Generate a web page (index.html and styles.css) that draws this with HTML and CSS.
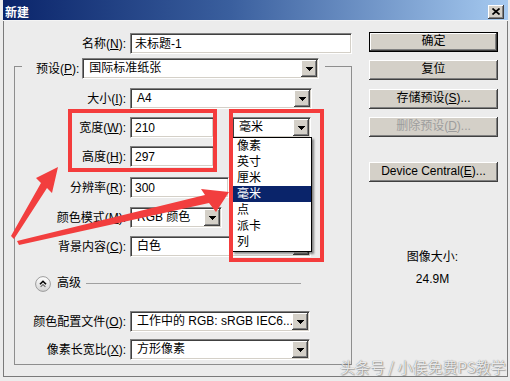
FILE: index.html
```html
<!DOCTYPE html>
<html lang="zh-CN">
<head>
<meta charset="utf-8">
<title>新建</title>
<link rel="stylesheet" href="styles.css">
</head>
<body>
<div class="window">
  <div class="titlebar">
    <span class="title">新建</span>
    <span class="close"><svg width="8" height="7" viewBox="0 0 8 7"><path d="M0.5 0.5 7.5 6.5M7.5 0.5 0.5 6.5" stroke="#000" stroke-width="1.7" fill="none"/></svg></span>
  </div>
  <div class="frame">
    <div class="left">
      <div class="row name-row">
        <span class="lbl">名称(<u>N</u>):</span>
        <div class="field w-name">未标题-1</div>
      </div>
      <fieldset class="group">
        <legend class="legend">
          <div class="legend-inner">
            <span class="lbl-inline">预设(<u>P</u>):</span>
            <div class="select w-preset"><span class="val">国际标准纸张</span><span class="arrow"><svg width="7" height="4" viewBox="0 0 7 4"><path d="M0 0h7v1H0zM1 1h5v1H1zM2 2h3v1H2zM3 3h1v1H3z"/></svg></span></div>
          </div>
        </legend>
        <div class="row r-size">
          <span class="lbl">大小(<u>I</u>):</span>
          <div class="select w-size"><span class="val">A4</span><span class="arrow"><svg width="7" height="4" viewBox="0 0 7 4"><path d="M0 0h7v1H0zM1 1h5v1H1zM2 2h3v1H2zM3 3h1v1H3z"/></svg></span></div>
        </div>
        <div class="row">
          <span class="lbl">宽度(<u>W</u>):</span>
          <div class="field w-dim">210</div>
          <div class="select w-unit"><span class="val">毫米</span><span class="arrow"><svg width="7" height="4" viewBox="0 0 7 4"><path d="M0 0h7v1H0zM1 1h5v1H1zM2 2h3v1H2zM3 3h1v1H3z"/></svg></span>
            <ul class="dropdown">
              <li>像素</li>
              <li>英寸</li>
              <li>厘米</li>
              <li class="sel">毫米</li>
              <li>点</li>
              <li>派卡</li>
              <li>列</li>
            </ul>
          </div>
        </div>
        <div class="row">
          <span class="lbl">高度(<u>H</u>):</span>
          <div class="field w-dim">297</div>
        </div>
        <div class="row r-res">
          <span class="lbl">分辨率(<u>R</u>):</span>
          <div class="field w-res">300</div>
        </div>
        <div class="row r-mode">
          <span class="lbl">颜色模式(<u>M</u>):</span>
          <div class="select w-mode"><span class="val">RGB 颜色</span><span class="arrow"><svg width="7" height="4" viewBox="0 0 7 4"><path d="M0 0h7v1H0zM1 1h5v1H1zM2 2h3v1H2zM3 3h1v1H3z"/></svg></span></div>
        </div>
        <div class="row">
          <span class="lbl">背景内容(<u>C</u>):</span>
          <div class="select w-bg"><span class="val">白色</span><span class="arrow"><svg width="7" height="4" viewBox="0 0 7 4"><path d="M0 0h7v1H0zM1 1h5v1H1zM2 2h3v1H2zM3 3h1v1H3z"/></svg></span></div>
        </div>
        <div class="adv">
          <svg class="adv-btn" width="16" height="16" viewBox="0 0 16 16">
            <defs><linearGradient id="advg" x1="0" y1="0" x2="0" y2="1"><stop offset="0" stop-color="#ffffff"/><stop offset="1" stop-color="#d2d2d2"/></linearGradient></defs>
            <circle cx="8" cy="8" r="7.4" fill="url(#advg)" stroke="#9c9c9c" stroke-width="1"/>
            <path d="M5 8.3 8 5.3 11 8.3" fill="none" stroke="#000" stroke-width="1.6"/>
            <path d="M5.6 10.8 8 8.6 10.4 10.8" fill="none" stroke="#6a6a6a" stroke-width="1.1"/>
          </svg>
          <span class="adv-text">高级</span>
          <span class="adv-line"></span>
        </div>
        <div class="row r-profile">
          <span class="lbl">颜色配置文件(<u>O</u>):</span>
          <div class="select w-prof"><span class="val">工作中的 RGB: sRGB IEC6...</span><span class="arrow"><svg width="7" height="4" viewBox="0 0 7 4"><path d="M0 0h7v1H0zM1 1h5v1H1zM2 2h3v1H2zM3 3h1v1H3z"/></svg></span></div>
        </div>
        <div class="row r-aspect">
          <span class="lbl">像素长宽比(<u>X</u>):</span>
          <div class="select w-prof"><span class="val">方形像素</span><span class="arrow"><svg width="7" height="4" viewBox="0 0 7 4"><path d="M0 0h7v1H0zM1 1h5v1H1zM2 2h3v1H2zM3 3h1v1H3z"/></svg></span></div>
        </div>
      </fieldset>
    </div>
    <div class="right">
      <div class="btn btn-default">确定</div>
      <div class="btn b-reset">复位</div>
      <div class="btn b-save">存储预设(<u>S</u>)...</div>
      <div class="btn b-del disabled">删除预设(<u>D</u>)...</div>
      <div class="btn b-device">Device Central(<u>E</u>)...</div>
      <div class="info">
        <div class="info-label">图像大小:</div>
        <div class="info-value">24.9M</div>
      </div>
    </div>
  </div>
</div>

<div class="mark mark-1"></div>
<div class="mark mark-2"></div>
<svg class="arrows" width="510" height="381" viewBox="0 0 510 381">
  <polygon points="11,236 41,183 36,178 58,167 52,193 47,188 14,239" fill="#f23e3e"/>
  <polygon points="17,241 205,195 201,189 229,192 216,212 209,203 19,245" fill="#f23e3e"/>
</svg>
<div class="watermark">头条号 / 小侯免费PS教学</div>
</body>
</html>
```
FILE: styles.css
```css
* { box-sizing: border-box; }
html, body { margin: 0; padding: 0; }
body {
  width: 510px;
  height: 381px;
  position: relative;
  overflow: hidden;
  background: #ececec;
  color: #000;
  font-family: "Liberation Sans", "Noto Sans CJK SC", sans-serif;
  font-size: 12px;
  line-height: 16px;
}
u { text-decoration: underline; text-underline-offset: 1px; }

.window {
  margin-left: 3px;
  width: 505px;
  height: 377px;
  display: flex;
  flex-direction: column;
}
.titlebar {
  height: 21px;
  flex: none;
  display: flex;
  justify-content: space-between;
  align-items: flex-start;
  background: linear-gradient(to right, #0a246a 0%, #3a5f9e 45%, #a6caf0 100%);
  border-bottom: 1px solid #f4f4f4;
}
.title {
  color: #fff;
  font-family: "Noto Sans CJK SC", sans-serif;
  font-weight: bold;
  font-size: 12px;
  line-height: 16px;
  padding: 4px 0 0 2px;
}
.close {
  width: 16px;
  height: 14px;
  margin: 5px 4px 0 0;
  background: #d4d0c8;
  box-shadow: inset -1px -1px #404040, inset 1px 1px #fff, inset -2px -2px #808080;
  display: flex;
  align-items: center;
  justify-content: center;
}
.close svg { display: block; margin: 0 1px 1px 0; }

.frame {
  flex: 1;
  display: flex;
  border: 1px solid #7a7a7a;
  border-top: none;
  padding: 11px 0 0 10px;
}
.left {
  width: 338px;
  flex: none;
  padding-top: 1px;
}
.right {
  width: 129px;
  flex: none;
  margin-left: 17px;
}

/* rows */
.row {
  display: flex;
  align-items: center;
  height: 21px;
  margin-top: 8px;
}
.name-row, .r-size { margin-top: 0; }
.r-res { margin-top: 10px; }
.r-mode { margin-top: 9px; }
.r-profile { margin-top: 19px; }
.r-aspect { margin-top: 7px; }

.lbl {
  width: 112px;
  flex: none;
  text-align: right;
  white-space: nowrap;
  margin-right: 4px;
}
.group .lbl { width: 111px; }
.lbl-inline { white-space: nowrap; margin-right: 3px; }

/* group box */
.group {
  margin: 0;
  min-width: 0;
  width: 338px;
  border: 1px solid #8e8e8e;
  padding: 9px 0 4px 0;
}
.legend {
  margin-left: 7px;
  padding: 4px 6px 0 14px;
}
.legend-inner {
  display: flex;
  align-items: center;
  height: 21px;
}

/* controls */
.field, .select {
  height: 21px;
  flex: none;
  background: #fff;
  border: 1px solid;
  border-color: #808080 #fff #fff #808080;
  box-shadow: inset 1px 1px #404040, inset -1px -1px #d4d0c8;
  white-space: nowrap;
}
.field {
  padding: 1px 3px 0 4px;
  line-height: 18px;
}
.select {
  display: flex;
  padding: 1px;
  position: relative;
}
.select .val {
  flex: 1;
  min-width: 0;
  overflow: hidden;
  padding-left: 5px;
  line-height: 17px;
}
.select .arrow {
  width: 16px;
  flex: none;
  background: #d4d0c8;
  box-shadow: inset -1px -1px #404040, inset 1px 1px #fff, inset -2px -2px #808080;
  display: flex;
  align-items: center;
  justify-content: center;
}
.arrow svg { display: block; margin-top: 1px; }

.w-name { width: 222px; }
.w-preset { width: 237px; }
.w-size { width: 182px; }
.w-dim { width: 84px; }
.w-res { width: 99px; }
.w-unit { width: 79px; margin-left: 18px; }
.w-mode { width: 92px; }
.w-bg { width: 181px; }
.w-prof { width: 180px; }

/* open dropdown list */
.dropdown {
  position: absolute;
  top: 100%;
  left: -1px;
  width: 80px;
  height: 115px;
  margin: 0;
  padding: 0 0 1px 0;
  list-style: none;
  background: #fff;
  border: 1px solid #000;
  box-shadow: 2px 2px 2px rgba(0, 0, 0, 0.45);
  z-index: 5;
}
.dropdown li {
  height: 16px;
  line-height: 16px;
  padding-left: 4px;
}
.dropdown li.sel { background: #0a246a; color: #fff; }

/* advanced */
.adv {
  display: flex;
  align-items: center;
  height: 16px;
  margin-top: 19px;
  padding-left: 20px;
  padding-right: 50px;
}
.adv-btn { display: block; flex: none; }
.adv-text { margin-left: 6px; line-height: 16px; margin-top: -2px; }
.adv-line {
  flex: 1;
  height: 1px;
  margin-left: 5px;
  margin-top: -2px;
  background: #a0a0a0;
}

/* buttons */
.btn {
  height: 20px;
  width: 129px;
  background: #d4d0c8;
  box-shadow: inset -1px -1px #404040, inset 1px 1px #fff, inset -2px -2px #808080;
  text-align: center;
  line-height: 19px;
  white-space: nowrap;
}
.btn-default {
  border: 1px solid #000;
  line-height: 17px;
}
.b-reset { margin-top: 8px; }
.b-save { margin-top: 9px; }
.b-del { margin-top: 8px; }
.b-device { margin-top: 25px; }
.disabled { color: #9d9d9d; }

.info {
  margin-top: 67px;
  text-align: center;
  padding-right: 2px;
}
.info-value { margin-top: 6px; }

/* annotations */
.mark {
  position: absolute;
  border: 4px solid #f43c3c;
  z-index: 10;
}
.mark-1 { left: 68px; top: 109px; width: 149px; height: 63px; }
.mark-2 { left: 229px; top: 109px; width: 95px; height: 153px; }
.arrows {
  position: absolute;
  left: 0;
  top: 0;
  z-index: 11;
  pointer-events: none;
}
.watermark {
  position: absolute;
  left: 340px;
  top: 358px;
  z-index: 12;
  font-family: "Noto Sans CJK SC", sans-serif;
  font-size: 15px;
  line-height: 17px;
  color: rgba(255, 255, 255, 0.85);
  text-shadow: 0 0 1px rgba(0, 0, 0, 0.55), 1px 1px 1px rgba(0, 0, 0, 0.25);
  white-space: nowrap;
}
```
